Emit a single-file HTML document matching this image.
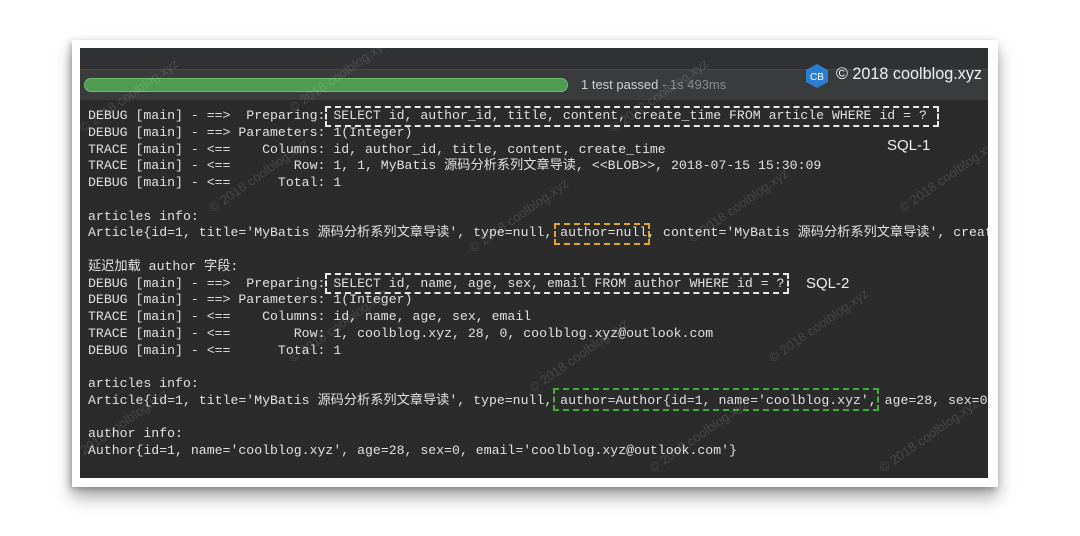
<!DOCTYPE html>
<html><head><meta charset="utf-8"><style>
html,body{margin:0;padding:0;background:#fff;width:1080px;height:536px;overflow:hidden;position:relative}
.frame{position:absolute;left:72px;top:40px;width:926px;height:447px;background:#fff;box-shadow:0 10px 16px rgba(0,0,0,.35),-2px 2px 6px rgba(0,0,0,.25)}
.panel{position:absolute;left:80px;top:48px;width:908px;height:430px;background:#2b2b2b;overflow:hidden}
.hd1{position:absolute;left:0;top:0;width:908px;height:21px;background:#303133;border-bottom:1px solid #46474a}
.hd2{position:absolute;left:0;top:22px;width:908px;height:30px;background:#3a3b3d}
.bar{position:absolute;left:4px;top:30px;width:482px;height:12px;border-radius:7px;background:#4e9b51;border:1px solid #6cbf6e}
.tp{position:absolute;left:501px;top:29px;font:13px "Liberation Sans",sans-serif;color:#cfcfcf}
.tp span{color:#8a8a8a}
.cr{position:absolute;left:756px;top:17px;font:16.2px "Liberation Sans",sans-serif;color:#f0f0f0}
pre{position:absolute;left:8px;top:60px;margin:0;font:13.2px/16.75px "Liberation Mono","Noto Sans CJK SC",monospace;color:#e0e0e0}
.box{position:absolute;border:2px dashed #e8e8e8}
.lbl{position:absolute;font:15px "Liberation Sans",sans-serif;color:#eee}
.wm{position:absolute;font:13px "Liberation Sans",sans-serif;color:rgba(255,255,255,.13);transform:rotate(-35deg);white-space:nowrap}
</style></head><body>
<div class="frame"></div>
<div class="panel">
<div class="hd1"></div><div class="hd2"></div>
<div class="bar"></div>
<div class="tp">1 test passed <span>- 1s 493ms</span></div>
<svg style="position:absolute;left:724px;top:15px" width="26" height="26" viewBox="0 0 26 26"><polygon points="13,1 24,7 24,19 13,25 2,19 2,7" fill="#2c7fd0"/><text x="13" y="17" text-anchor="middle" font-family="Liberation Sans" font-size="10" fill="#fff">CB</text></svg>
<div class="cr">© 2018 coolblog.xyz</div>
<pre>DEBUG [main] - ==>  Preparing: SELECT id, author_id, title, content, create_time FROM article WHERE id = ?
DEBUG [main] - ==> Parameters: 1(Integer)
TRACE [main] - &lt;==    Columns: id, author_id, title, content, create_time
TRACE [main] - &lt;==        Row: 1, 1, MyBatis 源码分析系列文章导读, &lt;&lt;BLOB&gt;&gt;, 2018-07-15 15:30:09
DEBUG [main] - &lt;==      Total: 1

articles info:
Article{id=1, title='MyBatis 源码分析系列文章导读', type=null, author=null, content='MyBatis 源码分析系列文章导读', create_time=2018-07-15}

延迟加载 author 字段:
DEBUG [main] - ==>  Preparing: SELECT id, name, age, sex, email FROM author WHERE id = ?
DEBUG [main] - ==> Parameters: 1(Integer)
TRACE [main] - &lt;==    Columns: id, name, age, sex, email
TRACE [main] - &lt;==        Row: 1, coolblog.xyz, 28, 0, coolblog.xyz@outlook.com
DEBUG [main] - &lt;==      Total: 1

articles info:
Article{id=1, title='MyBatis 源码分析系列文章导读', type=null, author=Author{id=1, name='coolblog.xyz', age=28, sex=0, email='x'}}

author info:
Author{id=1, name='coolblog.xyz', age=28, sex=0, email='coolblog.xyz@outlook.com'}</pre>
<div class="box" style="left:245px;top:58px;width:610px;height:17px"></div>
<div class="lbl" style="left:807px;top:89px">SQL-1</div>
<div class="box" style="left:474px;top:175px;width:92px;height:18px;border-color:#e0a526"></div>
<div class="box" style="left:245px;top:225px;width:460px;height:17px"></div>
<div class="lbl" style="left:726px;top:227px">SQL-2</div>
<div class="box" style="left:473px;top:340px;width:322px;height:19px;border-color:#3fae3a"></div>
<div class="wm" style="left:-10px;top:40px">© 2018 coolblog.xyz</div>
<div class="wm" style="left:200px;top:20px">© 2018 coolblog.xyz</div>
<div class="wm" style="left:520px;top:40px">© 2018 coolblog.xyz</div>
<div class="wm" style="left:120px;top:120px">© 2018 coolblog.xyz</div>
<div class="wm" style="left:380px;top:160px">© 2018 coolblog.xyz</div>
<div class="wm" style="left:600px;top:150px">© 2018 coolblog.xyz</div>
<div class="wm" style="left:810px;top:120px">© 2018 coolblog.xyz</div>
<div class="wm" style="left:200px;top:270px">© 2018 coolblog.xyz</div>
<div class="wm" style="left:440px;top:300px">© 2018 coolblog.xyz</div>
<div class="wm" style="left:680px;top:270px">© 2018 coolblog.xyz</div>
<div class="wm" style="left:-20px;top:370px">© 2018 coolblog.xyz</div>
<div class="wm" style="left:560px;top:380px">© 2018 coolblog.xyz</div>
<div class="wm" style="left:790px;top:380px">© 2018 coolblog.xyz</div>
</div>
</body></html>
